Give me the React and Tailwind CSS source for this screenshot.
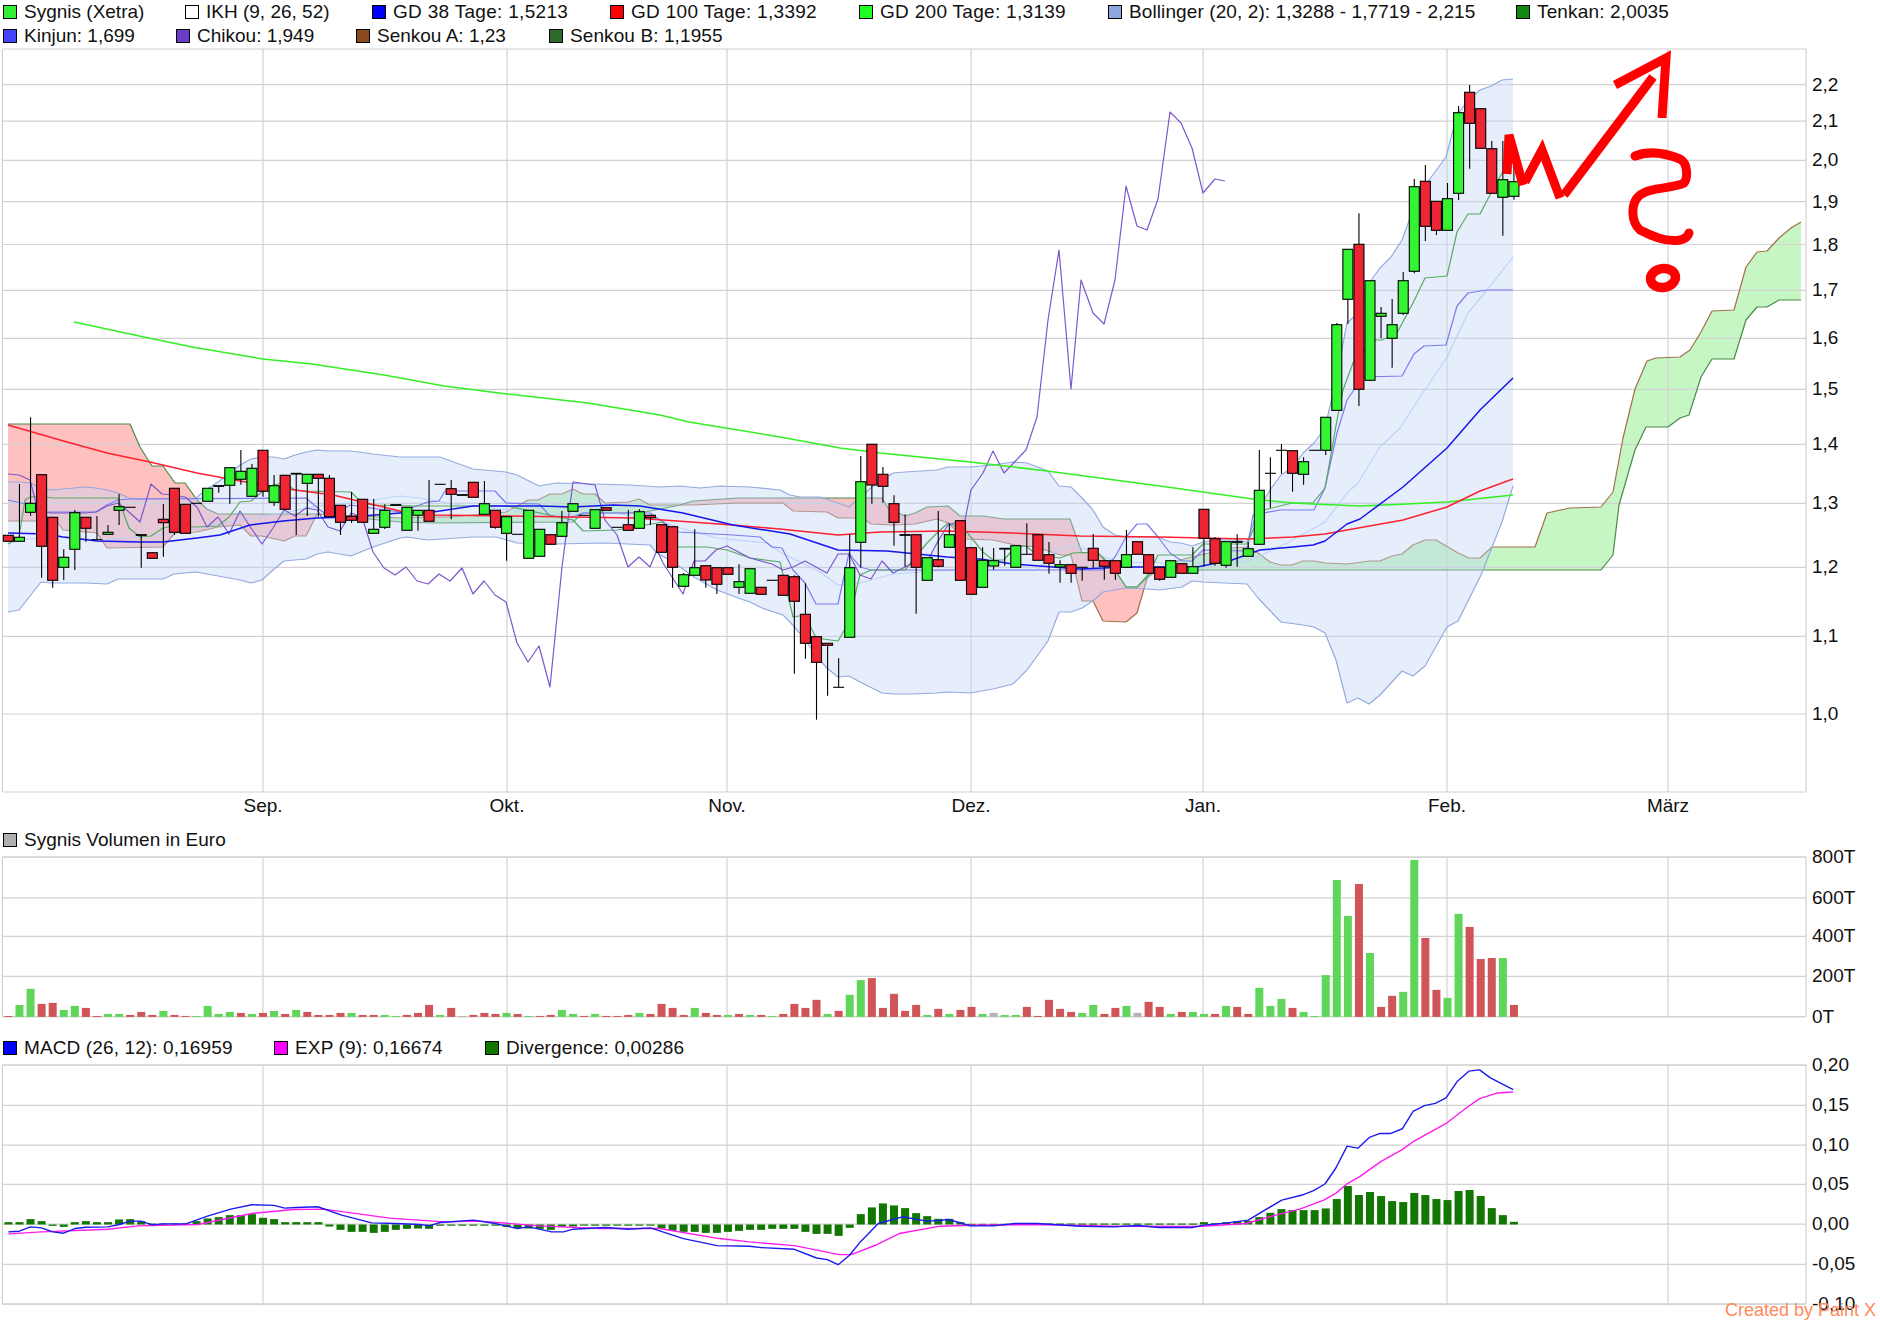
import React from 'react';

const candleX = (i) => 8.4 + 11.07 * i;

// [body top, body bottom, wick top, wick bottom, colour]  (page pixels)
const candles = [
  [535.3, 541.3, 535.3, 541.3, 'r'], [537.3, 541.3, 484, 541.3, 'g'], [503.3, 512.3, 417.3, 515.7, 'g'], [474.7, 546.3, 474.7, 577.7, 'r'],
  [517.3, 580.3, 517.3, 587.7, 'r'], [557.3, 567.3, 549.3, 580, 'g'], [512.7, 549.3, 510, 570, 'g'], [517.3, 528.3, 517.3, 541.7, 'r'],
  [539.7, 539.7, 516, 539.7, 'd'], [532.3, 534.3, 525, 534.3, 'g'], [506.7, 510.3, 494, 525, 'g'], [507.3, 507.3, 507.3, 507.3, 'd'],
  [535, 535, 535, 567.7, 'D'], [552.7, 558.3, 552.7, 558.3, 'r'], [519.3, 522.7, 504, 556.7, 'r'], [488.3, 532.3, 488.3, 535, 'r'],
  [504.3, 533.3, 504.3, 533.3, 'r'], [503.3, 503.3, 503.3, 503.3, 'd'], [488.3, 501.3, 488.3, 501.3, 'g'], [486, 486, 486, 492.7, 'D'],
  [467.7, 485.3, 467.7, 503.7, 'g'], [471.3, 479.3, 450, 484.7, 'g'], [468.3, 496.3, 464, 496.3, 'g'], [450.3, 491.3, 450.3, 496.7, 'r'],
  [485.7, 502.3, 475, 506, 'g'], [475.3, 509.3, 475.3, 509.3, 'r'], [473.7, 473.7, 473.7, 535, 'D'], [474.3, 483.3, 474.3, 516, 'g'],
  [474.3, 478.3, 474.3, 516.7, 'r'], [478.3, 516.7, 475, 516.7, 'r'], [505.3, 522.3, 505.3, 535, 'r'], [516.3, 520.3, 492, 523, 'r'],
  [499.3, 522.3, 499.3, 522.3, 'r'], [529.3, 533.3, 499, 533.3, 'g'], [510.3, 527.3, 504.3, 529, 'g'], [505, 505, 505, 505, 'D'],
  [507.3, 530.3, 507.3, 530.3, 'g'], [510.3, 515.3, 510.3, 530.7, 'g'], [510.3, 521.3, 480, 521.3, 'r'], [484.3, 484.3, 484.3, 484.3, 'd'],
  [488.7, 494.3, 480, 519.3, 'r'], [495, 495, 495, 495, 'D'], [482.3, 497.3, 482.3, 497.3, 'r'], [503.7, 514.3, 481, 514.3, 'g'],
  [510.3, 527.3, 510.3, 528.7, 'r'], [516.7, 533.3, 516.7, 560.7, 'g'], [534.3, 534.3, 534.3, 534.3, 'd'], [510.3, 558.3, 510.3, 558.3, 'g'],
  [529.3, 556.3, 529.3, 556.3, 'g'], [534.7, 544.3, 534.7, 544.3, 'r'], [522.7, 536.3, 511, 536.3, 'g'], [503.7, 511.3, 503.7, 511.3, 'g'],
  [515.3, 515.3, 515.3, 515.3, 'd'], [509.7, 528.3, 509.7, 528.3, 'g'], [507.7, 510.3, 507.7, 510.3, 'r'], [527.3, 527.3, 527.3, 527.3, 'd'],
  [524.7, 530.3, 510, 530.3, 'r'], [511.7, 528.3, 509.3, 528.3, 'g'], [515.3, 517.7, 515.3, 525, 'r'], [524.7, 552.3, 524.7, 552.3, 'r'],
  [526.7, 567.3, 526.7, 587.7, 'r'], [574.7, 586.3, 573, 586.3, 'g'], [567.7, 575.3, 529.3, 575.3, 'g'], [565.7, 580, 565.7, 587.7, 'r'],
  [567.7, 584.3, 567.7, 594, 'r'], [567.7, 574.3, 567.7, 574.3, 'r'], [581.7, 587.3, 564.3, 594, 'g'], [568.7, 593.3, 568.7, 593.3, 'g'],
  [587.3, 594.3, 587.3, 594.3, 'r'], [580.3, 580.3, 580.3, 580.3, 'd'], [575.3, 595.3, 575.3, 595.3, 'r'], [576.7, 601.3, 575.3, 673.7, 'r'],
  [614.3, 643.3, 583.3, 658.7, 'r'], [636.7, 662.3, 636.7, 719.7, 'r'], [643.3, 645.3, 643.3, 695.7, 'r'], [687.3, 687.3, 658.3, 687.3, 'd'],
  [567.7, 637.3, 534.3, 637.3, 'g'], [481.7, 542.3, 456, 567.7, 'g'], [444.3, 485, 444.3, 503.7, 'r'], [474.3, 486.3, 467, 502.7, 'r'],
  [503.7, 522.3, 495.3, 545.7, 'r'], [535, 535, 514.3, 566.7, 'D'], [534.7, 567.3, 534.7, 613.7, 'r'], [557.7, 580.3, 557.7, 580.3, 'g'],
  [559.7, 566.3, 511, 567.3, 'r'], [534.7, 547.3, 523.3, 547.3, 'g'], [520.7, 580.3, 520.7, 580.3, 'r'], [547.7, 594.3, 547.7, 594.3, 'r'],
  [560.3, 587.3, 547.3, 587.3, 'g'], [560.7, 566, 548, 569.7, 'g'], [548.7, 548.7, 548.7, 565.7, 'D'], [545.7, 567.3, 545.7, 567.3, 'g'],
  [554.3, 554.3, 523.3, 554.3, 'd'], [534.7, 560.3, 534.7, 560.3, 'r'], [554.7, 563.3, 542, 573.7, 'r'], [564.7, 567, 560.3, 582.7, 'g'],
  [564.7, 573.3, 564.7, 582.7, 'r'], [567.3, 567.3, 567.3, 580.7, 'd'], [548.3, 560.3, 534, 567.7, 'r'], [560.7, 566.3, 560.7, 579.7, 'r'],
  [560.7, 573.3, 560.7, 579.7, 'r'], [554.7, 567.3, 530, 567.3, 'g'], [541.7, 554.3, 541.7, 554.3, 'r'], [554.7, 573.3, 554.7, 573.3, 'r'],
  [567.3, 579.3, 567.3, 580.7, 'r'], [560.7, 577.3, 560.7, 577.3, 'g'], [563.7, 573.3, 563.7, 573.3, 'r'], [566.7, 573.3, 547.3, 573.3, 'g'],
  [509.3, 538.3, 509.3, 566.7, 'r'], [538.7, 563.3, 537, 565.7, 'r'], [541.7, 565.3, 541.7, 567.7, 'g'], [542, 542, 534.3, 566.7, 'D'],
  [548.7, 556.3, 542.3, 556.3, 'g'], [490.3, 544.3, 450, 544.3, 'g'], [473.3, 473.3, 457.3, 507.7, 'd'], [450.3, 450.3, 444, 473.7, 'd'],
  [450.7, 473.3, 450.7, 491.7, 'r'], [461.7, 474.3, 457.3, 484.7, 'g'], [450.3, 450.3, 450.3, 450.3, 'd'], [417.3, 450.3, 417.3, 455, 'g'],
  [324.7, 410.4, 323, 410.4, 'g'], [249.3, 299.3, 249.3, 324, 'g'], [244.3, 389.3, 213.3, 406, 'r'], [280.7, 380.3, 280.7, 380.3, 'g'],
  [313.3, 316.3, 307, 338.3, 'g'], [324.7, 338.3, 299, 367.7, 'g'], [280.7, 313.3, 272, 315, 'g'], [186.7, 271.3, 179, 273.3, 'g'],
  [181.3, 226.3, 165, 241, 'r'], [201.3, 230.3, 201.3, 235, 'r'], [198.7, 230.3, 183, 230.3, 'g'], [112.7, 193.3, 106, 200, 'g'],
  [92.3, 123.3, 85, 168.7, 'r'], [108.7, 148.3, 108.7, 148.3, 'r'], [148.7, 193.3, 141, 193.3, 'r'], [179.7, 197.3, 141, 235.7, 'g'],
  [181.7, 196.3, 150, 199.7, 'g'],
];

const gd200 = [[74,322],[144,337],[192,347],[263,359],[312,364],[384,375],[444,386],[507,394],[588,403],[660,415],[689,422],[780,437],[840,448],[880,453],[970,462],[1047,471],[1160,486],[1253,499],[1293,503],[1313,504],[1360,506],[1407,504],[1447,502],[1513,495]];
const gd100 = [[8,425],[67,442],[107,453],[150,462],[197,473],[240,481],[295,490],[333,495],[400,511],[433,515],[507,516],[573,517],[633,518],[663,520],[733,525],[780,529],[838,535],[880,532],[947,531],[1013,533],[1080,536],[1160,537],[1247,539],[1293,537],[1325,534],[1347,530],[1403,520],[1447,507],[1480,491],[1513,479]];
const gd38 = [[8,533],[47,534],[63,537],[97,541],[140,542],[163,542],[197,538],[220,535],[250,525],[283,521],[317,518],[350,517],[400,513],[433,512],[473,506],[540,506],[573,507],[613,505],[640,506],[683,513],[733,525],[790,534],[838,550],[887,551],[947,557],[980,559],[1013,564],[1080,569],[1126,567],[1197,567],[1232,560],[1260,550],[1293,547],[1313,545],[1325,541],[1347,524],[1360,519],[1403,487],[1447,448],[1480,410],[1513,378]];

const bollUpper = [[8,482],[19,482],[30,483],[41,488],[52,490],[63,489],[74,488],[85,487],[96,488],[107,490],[118,493],[129,498],[140,499],[196,498],[207,489],[218,482],[229,474],[240,465],[251,459],[262,457],[273,457],[284,459],[295,455],[306,452],[317,450],[328,451],[351,451],[373,454],[400,457],[440,457],[473,469],[506,472],[517,475],[539,486],[556,483],[630,485],[660,487],[680,486],[700,488],[720,486],[750,487],[780,490],[790,495],[800,497],[820,497],[838,503],[849,507],[872,487],[893,473],[905,472],[937,470],[948,467],[970,467],[993,465],[1013,462],[1027,463],[1048,471],[1059,486],[1071,487],[1082,498],[1093,510],[1103,527],[1115,535],[1126,537],[1158,537],[1170,542],[1181,543],[1192,546],[1203,542],[1214,540],[1237,540],[1247,542],[1258,510],[1270,490],[1281,475],[1292,468],[1303,453],[1314,443],[1325,428],[1336,380],[1347,323],[1358,313],[1369,283],[1380,268],[1391,257],[1402,240],[1413,210],[1424,187],[1435,172],[1446,157],[1457,115],[1468,100],[1480,90],[1491,86],[1502,80],[1513,79]];
const bollLower = [[8,612],[19,610],[30,596],[41,582],[52,583],[85,583],[107,584],[118,579],[163,579],[174,574],[196,572],[218,576],[240,580],[251,583],[262,580],[273,570],[284,561],[306,559],[317,554],[328,552],[351,556],[373,547],[400,538],[407,537],[428,540],[473,537],[496,537],[517,543],[539,544],[556,544],[605,543],[650,545],[657,553],[673,562],[694,577],[717,590],[738,598],[750,602],[762,608],[783,615],[790,622],[803,637],[817,657],[827,668],[838,677],[849,676],[860,682],[882,693],[893,694],[913,694],[937,693],[948,692],[970,693],[993,689],[1013,684],[1027,670],[1048,641],[1059,612],[1071,612],[1082,608],[1093,601],[1103,592],[1126,588],[1147,589],[1160,590],[1182,587],[1192,581],[1203,582],[1247,584],[1258,598],[1281,622],[1303,625],[1314,627],[1325,633],[1336,660],[1347,703],[1358,698],[1369,704],[1380,695],[1402,671],[1413,676],[1425,666],[1447,627],[1458,621],[1481,575],[1502,522],[1513,486]];
const bollMid = [[8,544],[20,540],[40,538],[67,537],[97,540],[140,537],[173,533],[197,528],[240,520],[283,513],[317,506],[350,503],[400,496],[420,498],[460,505],[510,510],[550,515],[613,513],[660,520],[677,527],[717,538],[767,543],[780,552],[800,562],[820,572],[838,585],[860,583],[893,574],[950,570],[1037,570],[1053,553],[1067,546],[1080,547],[1113,560],[1126,563],[1158,562],[1180,570],[1203,562],[1247,562],[1287,543],[1325,522],[1347,493],[1358,483],[1380,447],[1400,428],[1418,400],[1447,357],[1468,313],[1487,290],[1513,257]];

const chikou = [[8,474],[19,475],[30,480],[36,503],[41,512],[52,513],[85,513],[96,512],[107,506],[118,503],[129,512],[140,522],[151,484],[162,494],[173,495],[185,497],[197,507],[207,527],[218,517],[229,534],[240,511],[251,528],[262,544],[273,528],[284,510],[295,516],[306,508],[317,510],[328,527],[340,531],[351,513],[362,517],[373,552],[384,568],[395,575],[406,567],[417,581],[428,584],[439,574],[450,581],[462,568],[473,594],[484,581],[495,595],[506,602],[517,643],[528,662],[539,646],[550,687],[562,567],[573,482],[595,485],[605,520],[617,535],[628,567],[639,557],[650,567],[657,550],[663,563],[672,577],[683,594],[694,561],[705,561],[716,550],[727,546],[750,558],[772,564],[783,570],[793,567],[805,561],[827,573],[838,554],[849,554],[860,575],[871,579],[882,561],[893,573],[905,567],[915,562],[927,562],[937,543],[948,525],[965,520],[971,490],[983,473],[993,451],[1004,473],[1026,450],[1037,417],[1048,320],[1059,250],[1071,389],[1081,280],[1093,313],[1104,324],[1115,280],[1126,186],[1137,226],[1147,230],[1158,199],[1170,112],[1181,123],[1192,148],[1203,193],[1215,179],[1225,181]];
const kinjun = [[8,500],[30,505],[41,512],[96,512],[107,505],[118,500],[129,499],[306,498],[320,510],[330,517],[350,505],[400,512],[428,502],[439,501],[445,491],[495,491],[506,503],[539,504],[550,516],[573,517],[583,513],[650,513],[660,520],[678,532],[733,535],[760,537],[772,547],[782,548],[793,570],[805,583],[816,604],[838,604],[849,553],[860,567],[871,570],[1103,570],[1115,557],[1126,537],[1137,524],[1147,524],[1158,537],[1170,553],[1182,561],[1192,561],[1203,550],[1247,551],[1253,515],[1280,510],[1314,510],[1325,488],[1337,433],[1347,400],[1363,377],[1402,376],[1414,354],[1424,346],[1446,345],[1457,306],[1468,293],[1487,290],[1513,290]];
const tenkan = [[8,544],[19,537],[25,500],[30,497],[41,496],[52,498],[118,498],[129,528],[140,537],[151,536],[163,528],[174,526],[196,527],[218,526],[229,517],[240,502],[251,501],[262,492],[273,485],[284,483],[295,490],[306,491],[351,492],[362,503],[373,505],[417,506],[507,506],[573,520],[583,531],[617,530],[663,522],[677,547],[707,547],[727,550],[750,558],[780,562],[793,617],[805,615],[816,638],[838,641],[849,622],[857,587],[860,575],[871,570],[905,570],[927,543],[937,533],[948,523],[965,530],[983,552],[993,560],[1004,560],[1015,547],[1026,546],[1037,555],[1060,558],[1073,553],[1097,552],[1117,573],[1126,587],[1137,587],[1148,575],[1158,555],[1192,555],[1203,544],[1247,544],[1253,530],[1264,510],[1292,503],[1313,503],[1325,488],[1337,420],[1343,390],[1353,363],[1375,340],[1382,340],[1397,333],[1413,303],[1425,278],[1447,276],[1457,232],[1468,214],[1480,214],[1491,193],[1502,173],[1513,150]];

const senkouA = [[8,521],[57,521],[63,530],[97,533],[107,548],[163,547],[175,533],[197,532],[218,527],[240,525],[251,536],[262,536],[284,541],[295,536],[306,536],[317,514],[400,518],[430,517],[450,517],[506,512],[528,500],[538,500],[550,494],[562,494],[573,489],[583,494],[595,494],[605,503],[628,502],[639,499],[650,505],[693,505],[738,503],[783,503],[793,511],[827,512],[838,518],[863,518],[871,524],[893,525],[915,524],[937,519],[948,523],[965,539],[993,540],[1015,545],[1037,547],[1060,555],[1071,555],[1082,601],[1093,601],[1103,621],[1126,622],[1137,613],[1148,575],[1158,570],[1180,560],[1200,555],[1232,548],[1247,547],[1258,553],[1270,562],[1281,565],[1292,565],[1303,561],[1314,561],[1325,563],[1347,564],[1370,561],[1380,561],[1392,556],[1402,554],[1413,545],[1425,540],[1436,540],[1458,553],[1469,558],[1480,558],[1492,547],[1535,547],[1547,513],[1570,508],[1601,507],[1613,492],[1623,438],[1635,389],[1647,361],[1656,358],[1680,357],[1690,350],[1701,332],[1712,311],[1734,310],[1746,267],[1757,252],[1767,251],[1779,238],[1791,228],[1801,222]];
const senkouB = [[8,424],[130,424],[140,447],[152,466],[163,466],[175,483],[185,483],[197,500],[207,509],[218,514],[317,514],[400,522],[433,523],[573,522],[583,513],[640,513],[680,505],[693,501],[738,498],[882,498],[888,508],[905,516],[915,513],[927,507],[948,506],[960,516],[983,516],[1004,519],[1070,519],[1082,553],[1097,552],[1113,567],[1126,587],[1137,587],[1148,577],[1158,570],[1601,570],[1613,555],[1619,505],[1635,450],[1646,427],[1668,427],[1680,418],[1689,415],[1701,377],[1712,359],[1734,359],[1746,320],[1757,307],[1767,307],[1779,300],[1801,300]];

// top of each volume bar, read against the 0T line at 647
const volTops = [645,612,564,609,606,627,615,621,645,639,639,642,633,642,630,642,645,645,615,639,633,636,639,636,630,639,627,633,642,642,636,636,642,642,642,645,642,636,612,642,621,645,642,636,639,636,639,645,645,642,627,639,645,639,645,645,642,636,639,609,621,642,621,636,642,642,639,642,642,645,639,609,621,597,639,630,582,538,532,621,579,630,612,642,624,639,627,618,639,636,642,642,618,645,597,624,633,636,612,639,621,615,636,603,618,639,633,633,639,639,615,618,639,561,615,594,621,633,645,523,239,346,251,457,618,585,573,179,412,567,591,340,379,475,472,472,612];
const volColors = ['rggrrggrrg', 'grrrgrrggg', 'grgrgrgrrr', 'rgrrggrrrg', 'rxrrrgrgrr', 'ggrgrrrgrr', 'rrgrrgrgrg', 'rrrrgrggrr', 'rrrgrgrrgx', 'ggrrrrrggr', 'rgxrrgrggr', 'grrgggrggg', 'ggrgrrggrr', 'ggrrrgr'].join('');

const divergence = [1261,1261,1252,1258,1272,1275,1261,1258,1261,1261,1253,1252,1258,1265,1265,1265,1265,1258,1250,1246,1240,1240,1237,1248,1252,1261,1261,1261,1261,1274,1284,1290,1290,1293,1290,1284,1281,1280,1281,1271,1269,1269,1269,1269,1269,1275,1278,1280,1281,1284,1275,1274,1270,1269,1269,1269,1270,1270,1270,1280,1287,1290,1290,1293,1293,1290,1287,1284,1284,1281,1281,1281,1290,1296,1296,1302,1278,1237,1217,1205,1211,1219,1234,1243,1251,1251,1261,1266,1266,1266,1266,1266,1266,1265,1265,1265,1265,1265,1265,1265,1265,1265,1265,1265,1265,1265,1265,1265,1261,1264,1261,1258,1257,1246,1233,1222,1225,1225,1225,1220,1192,1153,1180,1171,1183,1198,1201,1174,1180,1192,1195,1168,1165,1183,1219,1240,1260];

const macdRaw = [[14,1290],[32,1288],[51,1275],[69,1278],[88,1290],[106,1294],[125,1280],[143,1276],[180,1275],[199,1268],[217,1258],[235,1258],[254,1269],[272,1266],[310,1266],[346,1243],[385,1222],[420,1209],[457,1211],[475,1219],[494,1217],[530,1215],[570,1240],[620,1263],[660,1265],[700,1268],[716,1272],[734,1262],[790,1255],[826,1265],[863,1280],[882,1275],[920,1290],[940,1290],[956,1282],[1010,1277],[1048,1282],[1085,1278],[1140,1310],[1196,1331],[1250,1333],[1270,1337],[1325,1342],[1362,1368],[1380,1373],[1398,1388],[1417,1360],[1435,1320],[1465,1265],[1505,1245],[1546,1258],[1568,1256],[1581,1253],[1600,1262],[1618,1272],[1656,1272],[1693,1265],[1730,1265],[1803,1273],[1858,1275],[1898,1271],[1933,1277],[1988,1277],[2008,1270],[2044,1264],[2082,1255],[2138,1195],[2172,1180],[2191,1167],[2210,1147],[2228,1100],[2247,1034],[2265,1040],[2284,1008],[2302,996],[2320,996],[2339,982],[2357,930],[2376,913],[2394,906],[2412,890],[2431,840],[2450,810],[2468,806],[2486,830],[2524,865]];
const expRaw = [[14,1296],[70,1290],[180,1282],[230,1272],[330,1268],[420,1235],[490,1223],[540,1222],[650,1249],[740,1260],[800,1258],[900,1272],[1000,1280],[1100,1280],[1200,1310],[1250,1320],[1325,1331],[1400,1358],[1420,1358],[1460,1330],[1500,1295],[1568,1273],[1618,1270],[1728,1268],[1858,1273],[1998,1274],[2078,1265],[2128,1240],[2168,1222],[2208,1195],[2228,1175],[2248,1145],[2268,1125],[2303,1080],[2338,1045],[2358,1020],[2413,965],[2448,917],[2468,892],[2498,875],[2524,872]];
const macdPts = macdRaw.map(([x, y]) => [x / 1.668, 800 + y / 2.987]);
const expPts = expRaw.map(([x, y]) => [x / 1.668, 800 + y / 2.987]);

const toPoints = (pts) => pts.map(([x, y]) => `${x},${y}`).join(' ');

const valueAt = (pts, x) => {
  for (let i = 1; i < pts.length; i++) {
    if (x <= pts[i][0]) {
      const [x0, y0] = pts[i - 1];
      const [x1, y1] = pts[i];
      return y0 + ((y1 - y0) * (x - x0)) / (x1 - x0);
    }
  }
  return pts[pts.length - 1][1];
};

// ichimoku cloud: green where Senkou A lies above B, pink where B lies above A
const cloudGreen = [];
const cloudPink = [];
const cloudBase = [];
for (let x = 8; x <= 1801; x++) {
  const a = valueAt(senkouA, x);
  const b = valueAt(senkouB, x);
  cloudGreen.push([x, Math.min(a, b)]);
  cloudPink.push([x, Math.max(a, b)]);
  cloudBase.push([x, b]);
}
const greenPoly = [...cloudGreen, ...[...cloudBase].reverse()];
const pinkPoly = [...cloudBase, ...[...cloudPink].reverse()];

const months = [['Sep.', 263], ['Okt.', 507], ['Nov.', 727], ['Dez.', 971], ['Jan.', 1203], ['Feb.', 1447], ['März', 1668]];
const gridX = [2.4, 263, 507, 727, 971, 1203, 1447, 1668, 1806];

const priceLines = [['2,2', 84.6], ['2,1', 121.2], ['2,0', 160.4], ['1,9', 201.6], ['1,8', 244.5], ['1,7', 290.4], ['1,6', 338.4], ['1,5', 389.3], ['1,4', 444.4], ['1,3', 503.4], ['1,2', 567.3], ['1,1', 636.4], ['1,0', 714]];
const volLines = [['800T', 857.2], ['600T', 897.8], ['400T', 936.3], ['200T', 976.4], ['0T', 1016.6]];
const macdLines = [['0,20', 1065.1], ['0,15', 1105.3], ['0,10', 1145.2], ['0,05', 1184.3], ['0,00', 1224.2], ['-0,05', 1264.3], ['-0,10', 1304.2]];

const GridLines = ({ top, bottom, lines }) => (
  <g stroke="#d2d2d2" strokeWidth="1.2">
    {gridX.map((x) => <line key={x} x1={x} x2={x} y1={top} y2={bottom} />)}
    {lines.map(([label, y]) => <line key={label} x1="2.4" x2="1806" y1={y} y2={y} />)}
    <line x1="2.4" x2="1806" y1={top} y2={top} />
    <line x1="2.4" x2="1806" y1={bottom} y2={bottom} />
  </g>
);

const AxisLabels = ({ lines }) => (
  <g fill="#111">
    {lines.map(([label, y]) => (
      <text key={label} x="1812" y={y + 6} className="text-[19px]">{label}</text>
    ))}
  </g>
);

const Line = ({ pts, color, width = 1.2 }) => (
  <polyline points={toPoints(pts)} fill="none" stroke={color} strokeWidth={width} strokeLinejoin="round" />
);

const Candle = ({ c, i }) => {
  const [top, bottom, wickTop, wickBottom, kind] = c;
  const x = candleX(i);
  const isDoji = kind === 'd' || kind === 'D';
  return (
    <g>
      {wickTop !== wickBottom && <line x1={x} x2={x} y1={wickTop} y2={wickBottom} stroke="#000" strokeWidth="1.1" />}
      {isDoji ? (
        <line x1={x - 5.5} x2={x + 5.5} y1={top} y2={top} stroke="#000" strokeWidth={kind === 'D' ? 1.8 : 1.1} />
      ) : (
        <rect x={x - 5} y={top} width="10" height={bottom - top} fill={kind === 'g' ? '#33f333' : '#ee2533'} stroke="#000" strokeWidth="1.1" />
      )}
    </g>
  );
};

const Legend = ({ label, swatch, width }) => (
  <div className={`flex items-center gap-[7px] shrink-0 ${width}`}>
    <span className={`w-[14px] h-[14px] border border-black ${swatch}`} />
    <span className="whitespace-nowrap">{label}</span>
  </div>
);

const App = () => {
  return (
    <div className="w-[1880px] h-[1325px] bg-white overflow-hidden text-[19px] leading-[24px] text-[#111] font-['Liberation_Sans',sans-serif]">
      <div className="h-[48px] pl-[3px]">
        <div className="flex h-[24px]">
          <Legend label="Sygnis (Xetra)" swatch="bg-[#33ee33]" width="w-[182px]" />
          <Legend label="IKH (9, 26, 52)" swatch="bg-white" width="w-[187px]" />
          <Legend label="GD 38 Tage: 1,5213" swatch="bg-[#0000ff]" width="w-[238px] tracking-[0.3px]" />
          <Legend label="GD 100 Tage: 1,3392" swatch="bg-[#ff0000]" width="w-[249px] tracking-[0.3px]" />
          <Legend label="GD 200 Tage: 1,3139" swatch="bg-[#22ff22]" width="w-[249px] tracking-[0.3px]" />
          <Legend label="Bollinger (20, 2): 1,3288 - 1,7719 - 2,215" swatch="bg-[#8ea8df]" width="w-[408px] tracking-[0.1px]" />
          <Legend label="Tenkan: 2,0035" swatch="bg-[#118811]" width="w-[200px] tracking-[0.15px]" />
        </div>
        <div className="flex h-[24px]">
          <Legend label="Kinjun: 1,699" swatch="bg-[#4444ff]" width="w-[173px]" />
          <Legend label="Chikou: 1,949" swatch="bg-[#6a3cc8]" width="w-[180px]" />
          <Legend label="Senkou A: 1,23" swatch="bg-[#8b4a1b]" width="w-[193px]" />
          <Legend label="Senkou B: 1,1955" swatch="bg-[#2e6b2e]" width="w-[240px] tracking-[0.1px]" />
        </div>
      </div>

      <svg viewBox="0 48 1880 780" className="block w-[1880px] h-[780px] overflow-visible">
        <polygon points={toPoints(greenPoly)} fill="#c6f6c4" />
        <polygon points={toPoints(pinkPoly)} fill="#ffc0c0" />
        <GridLines top={49} bottom={792} lines={priceLines} />
        <Line pts={senkouA} color="#a0704a" />
        <Line pts={senkouB} color="#4a8a4a" />
        <polygon points={toPoints([...bollUpper, ...[...bollLower].reverse()])} fill="#c0d4f7" fillOpacity="0.4" />
        <Line pts={bollUpper} color="#93aadf" />
        <Line pts={bollLower} color="#93aadf" />
        <Line pts={bollMid} color="#bcd2fa" />
        <Line pts={kinjun} color="#7a7af2" />
        <Line pts={tenkan} color="#58aa62" />
        <Line pts={chikou} color="#7c58cc" />
        <Line pts={gd200} color="#33f022" width="1.5" />
        <Line pts={gd100} color="#ff2030" width="1.5" />
        <Line pts={gd38} color="#1515ee" width="1.5" />
        {candles.map((c, i) => <Candle key={i} c={c} i={i} />)}
        <AxisLabels lines={priceLines} />
        {months.map(([label, x]) => (
          <text key={label} x={x} y="812" textAnchor="middle" fill="#111" className="text-[19px]">{label}</text>
        ))}
        {/* hand drawn arrow and question mark */}
        <g fill="none" stroke="#ff0000" strokeWidth="9">
          <polyline points="1507,174 1509,135 1523,185" />
          <polyline points="1525,182 1542,150 1560,198" />
          <line x1="1564" y1="195" x2="1653" y2="77" />
          <polyline points="1615,85 1666,58 1662,118" />
          <path strokeLinecap="round" d="M1635,156 C1650,150 1665,153 1680,159 C1688,163 1688,178 1684,183 C1672,189 1650,187 1640,195 C1630,203 1631,222 1640,230 C1655,238 1670,242 1680,240 C1685,239 1688,236 1689,233" />
          <ellipse cx="1663" cy="278" rx="12.5" ry="9.5" strokeWidth="9.5" transform="rotate(-8 1663 278)" />
        </g>
      </svg>

      <div className="h-[24px] pl-[3px] flex">
        <Legend label="Sygnis Volumen in Euro" swatch="bg-[#b0b0b0]" width="w-[300px]" />
      </div>

      <svg viewBox="0 852 1880 184" className="block w-[1880px] h-[184px] overflow-visible">
        <GridLines top={857.2} bottom={1016.6} lines={volLines} />
        {volTops.map((top, i) => {
          const y = 800 + top / 2.987;
          const fill = volColors[i] === 'g' ? '#5fd65a' : volColors[i] === 'x' ? '#b3b3b3' : '#cf5558';
          return <rect key={i} x={candleX(i) - 4} y={y} width="8" height={1016.9 - y} fill={fill} />;
        })}
        <AxisLabels lines={volLines} />
      </svg>

      <div className="h-[24px] pl-[3px] flex">
        <Legend label="MACD (26, 12): 0,16959" swatch="bg-[#0000ff]" width="w-[271px] tracking-[0.12px]" />
        <Legend label="EXP (9): 0,16674" swatch="bg-[#ff00ff]" width="w-[211px] tracking-[0.15px]" />
        <Legend label="Divergence: 0,00286" swatch="bg-[#117700]" width="w-[260px] tracking-[0.15px]" />
      </div>

      <svg viewBox="0 1060 1880 265" className="block w-[1880px] h-[265px] overflow-visible">
        <GridLines top={1065.1} bottom={1304.2} lines={macdLines} />
        {divergence.map((z, i) => {
          const y = 800 + z / 2.987;
          return <rect key={i} x={candleX(i) - 4} y={Math.min(y, 1224.5)} width="8" height={Math.max(Math.abs(y - 1224.5), 1.2)} fill="#117700" />;
        })}
        <Line pts={expPts} color="#ff1bf0" width="1.4" />
        <Line pts={macdPts} color="#1a1aee" width="1.4" />
        <AxisLabels lines={macdLines} />
        <text x="1725" y="1316" fill="#ff8a5c" className="text-[18px]">Created by Paint X</text>
      </svg>
    </div>
  );
};

export default App;
